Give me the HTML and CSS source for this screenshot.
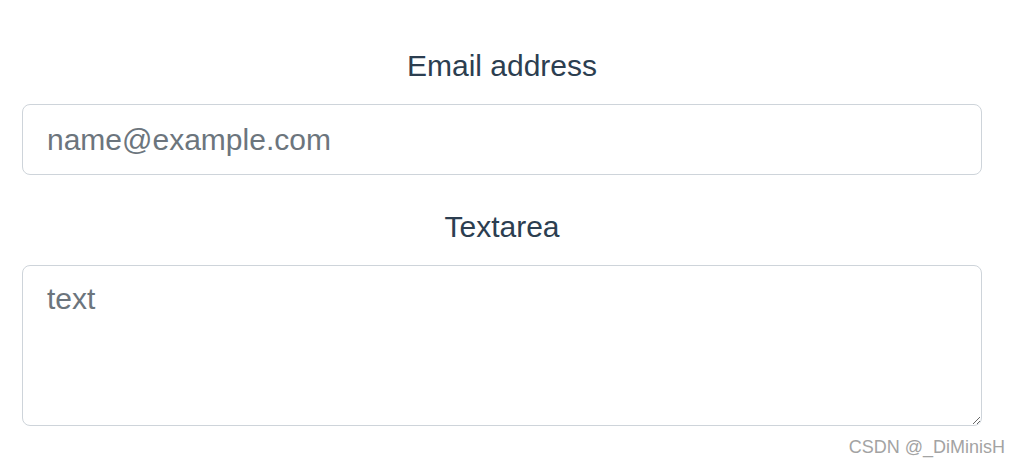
FILE: index.html
```html
<!DOCTYPE html>
<html lang="en">
<head>
<meta charset="utf-8">
<title>Form</title>
<link rel="stylesheet" href="styles.css">
</head>
<body>
<div class="app">
  <div class="group">
    <label class="label" for="email">Email address</label>
    <input class="control" id="email" type="email" placeholder="name@example.com">
  </div>
  <div class="group">
    <label class="label" for="ta">Textarea</label>
    <textarea class="control area" id="ta" placeholder="text"></textarea>
  </div>
</div>
<div class="watermark">CSDN @_DiMinisH</div>
</body>
</html>
```
FILE: styles.css
```css
* { box-sizing: border-box; }
html, body { margin: 0; padding: 0; background: #fff; }
body {
  font-family: "Liberation Sans", Arial, sans-serif;
  color: #2c3e50;
  width: 1020px;
  height: 466px;
  position: relative;
  overflow: hidden;
}
.app {
  padding: 43px 38px 0 22px;
  display: flex;
  flex-direction: column;
  gap: 29px;
}
.group {
  display: flex;
  flex-direction: column;
}
.label {
  display: block;
  text-align: center;
  font-size: 30px;
  line-height: 45px;
  margin-bottom: 16px;
}
.control {
  display: block;
  width: 960px;
  height: 71px;
  padding: 12px 24px;
  font-family: "Liberation Sans", Arial, sans-serif;
  font-size: 30px;
  line-height: 45px;
  color: #212529;
  background: #fff;
  border: 1px solid #ced4da;
  border-radius: 8px;
  outline: none;
}
.control::placeholder { color: #6c757d; opacity: 1; }
.area {
  height: 161px;
  padding-top: 10px;
  resize: vertical;
}
.watermark {
  position: absolute;
  right: 15px;
  top: 437px;
  font-size: 18px;
  line-height: 20px;
  color: #a3a3a3;
}
```
